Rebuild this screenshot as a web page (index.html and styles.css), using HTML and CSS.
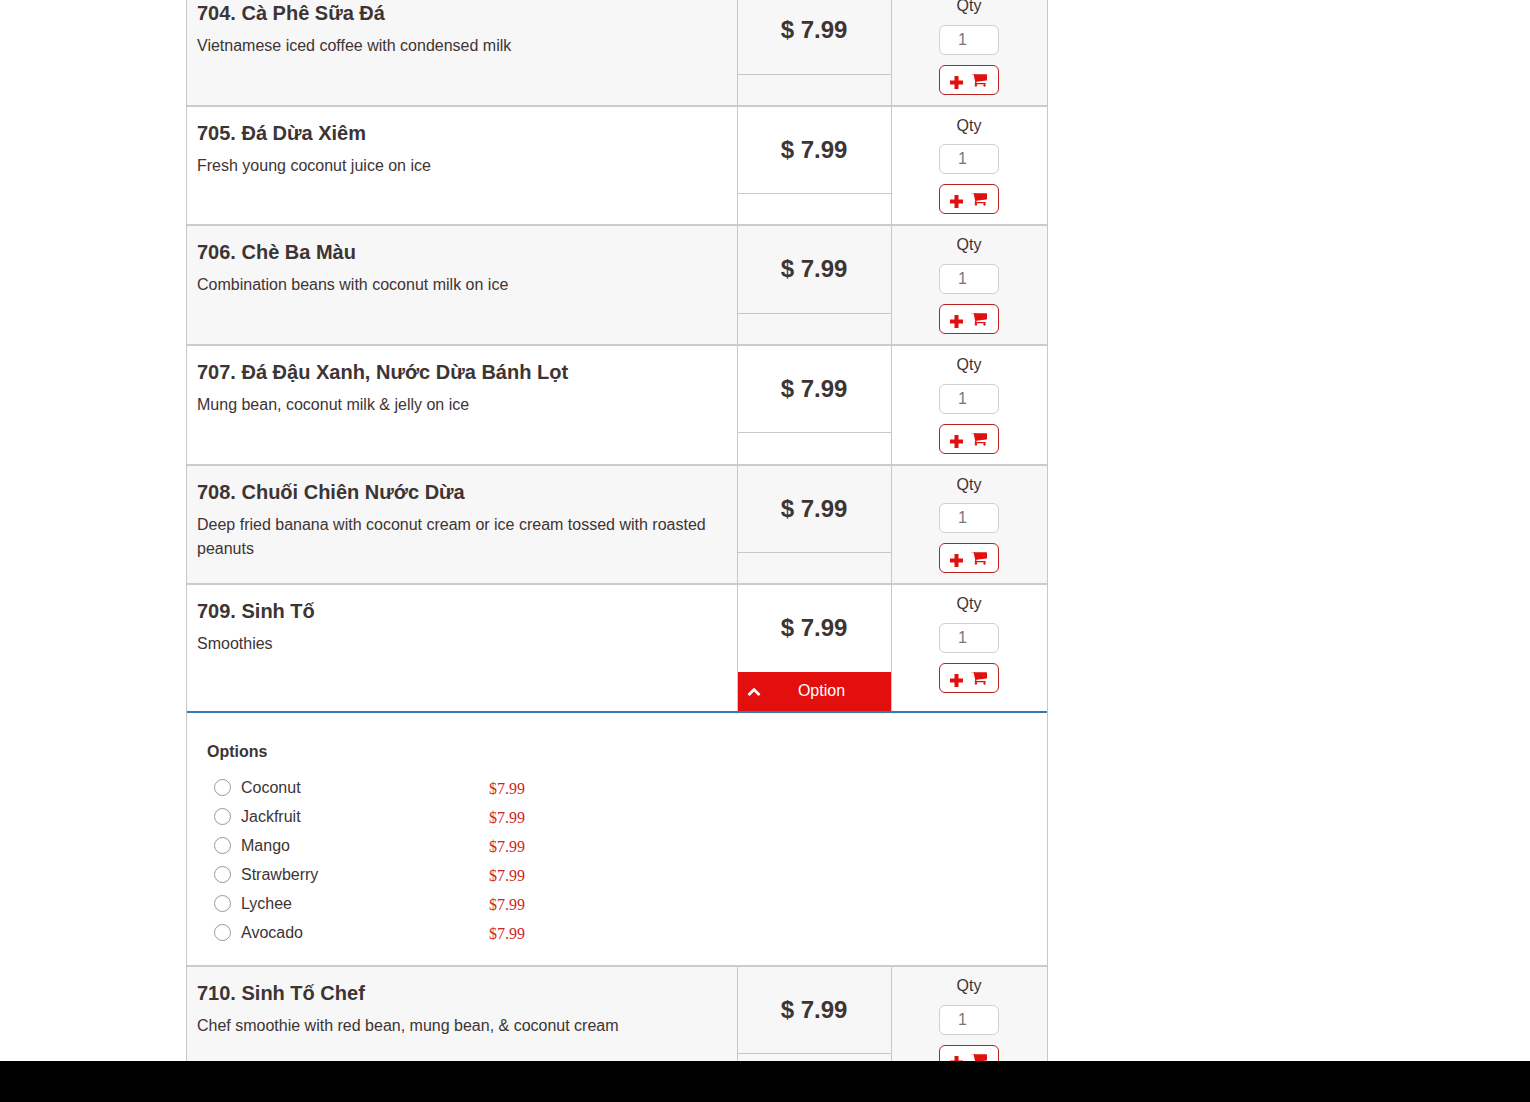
FILE: index.html
```html
<!DOCTYPE html>
<html lang="en">
<head>
    <meta charset="UTF-8">
    <meta name="viewport" content="width=device-width, initial-scale=1.0">
    <title>Menu</title>
    <link rel="stylesheet" href="styles.css">
</head>
<body>
    <svg class="icon-defs" width="0" height="0">
        <symbol id="icon-cart" viewBox="0 384 1664 1280"><path d="M640 1536q0 52-38 90t-90 38-90-38-38-90 38-90 90-38 90 38 38 90zm896 0q0 52-38 90t-90 38-90-38-38-90 38-90 90-38 90 38 38 90zm128-1088v512q0 24-16.500 42.500t-40.500 21.500l-1044 122q13 60 13 70 0 16-24 64h920q26 0 45 19t19 45-19 45-45 19h-1024q-26 0-45-19t-19-45q0-11 8-31.500t16-36 21.500-40 15.500-29.500l-177-823h-204q-26 0-45-19t-19-45 19-45 45-19h256q16 0 28.500 6.500t19.500 15.500 13 24.500 8 26 5.500 29.500 4.500 26h1201q26 0 45 19t19 45z"/></symbol>
        <symbol id="icon-plus" viewBox="0 0 13 13"><path d="M4.500 0h4v4.500h4.500v4H8.500V13h-4V8.500H0v-4h4.500z"/></symbol>
        <symbol id="icon-up" viewBox="0 0 1792 1792"><path d="M1683 1331l-166 165q-19 19-45 19t-45-19l-531-531-531 531q-19 19-45 19t-45-19l-166-165q-19-19-19-45.500t19-45.500l742-741q19-19 45-19t45 19l742 741q19 19 19 45.500t-19 45.500z"/></symbol>
    </svg>

    <div class="menu">
        <!-- 704 -->
        <div class="row shaded">
            <div class="item">
                <h3>704. Cà Phê Sữa Đá</h3>
                <p>Vietnamese iced coffee with condensed milk</p>
            </div>
            <div class="price-cell"><div class="price">$ 7.99</div><div class="price-foot"></div></div>
            <div class="order">
                <label>Qty</label>
                <input class="qty" type="text" value="1">
                <button class="add"><svg class="plus"><use href="#icon-plus"/></svg><svg class="cart"><use href="#icon-cart"/></svg></button>
            </div>
        </div>
        <!-- 705 -->
        <div class="row">
            <div class="item">
                <h3>705. Đá Dừa Xiêm</h3>
                <p>Fresh young coconut juice on ice</p>
            </div>
            <div class="price-cell"><div class="price">$ 7.99</div><div class="price-foot"></div></div>
            <div class="order">
                <label>Qty</label>
                <input class="qty" type="text" value="1">
                <button class="add"><svg class="plus"><use href="#icon-plus"/></svg><svg class="cart"><use href="#icon-cart"/></svg></button>
            </div>
        </div>
        <!-- 706 -->
        <div class="row shaded">
            <div class="item">
                <h3>706. Chè Ba Màu</h3>
                <p>Combination beans with coconut milk on ice</p>
            </div>
            <div class="price-cell"><div class="price">$ 7.99</div><div class="price-foot"></div></div>
            <div class="order">
                <label>Qty</label>
                <input class="qty" type="text" value="1">
                <button class="add"><svg class="plus"><use href="#icon-plus"/></svg><svg class="cart"><use href="#icon-cart"/></svg></button>
            </div>
        </div>
        <!-- 707 -->
        <div class="row">
            <div class="item">
                <h3>707. Đá Đậu Xanh, Nước Dừa Bánh Lọt</h3>
                <p>Mung bean, coconut milk &amp; jelly on ice</p>
            </div>
            <div class="price-cell"><div class="price">$ 7.99</div><div class="price-foot"></div></div>
            <div class="order">
                <label>Qty</label>
                <input class="qty" type="text" value="1">
                <button class="add"><svg class="plus"><use href="#icon-plus"/></svg><svg class="cart"><use href="#icon-cart"/></svg></button>
            </div>
        </div>
        <!-- 708 -->
        <div class="row shaded">
            <div class="item">
                <h3>708. Chuối Chiên Nước Dừa</h3>
                <p>Deep fried banana with coconut cream or ice cream tossed with roasted peanuts</p>
            </div>
            <div class="price-cell"><div class="price">$ 7.99</div><div class="price-foot"></div></div>
            <div class="order">
                <label>Qty</label>
                <input class="qty" type="text" value="1">
                <button class="add"><svg class="plus"><use href="#icon-plus"/></svg><svg class="cart"><use href="#icon-cart"/></svg></button>
            </div>
        </div>
        <!-- 709 with options open -->
        <div class="row open">
            <div class="item">
                <h3>709. Sinh Tố</h3>
                <p>Smoothies</p>
            </div>
            <div class="price-cell">
                <div class="price">$ 7.99</div>
                <button class="option-btn"><svg class="up"><use href="#icon-up"/></svg><span>Option</span></button>
            </div>
            <div class="order">
                <label>Qty</label>
                <input class="qty" type="text" value="1">
                <button class="add"><svg class="plus"><use href="#icon-plus"/></svg><svg class="cart"><use href="#icon-cart"/></svg></button>
            </div>
        </div>
        <div class="options">
            <h4>Options</h4>
            <div class="option"><input type="radio" name="smoothie"><span class="name">Coconut</span><span class="opt-price">$7.99</span></div>
            <div class="option"><input type="radio" name="smoothie"><span class="name">Jackfruit</span><span class="opt-price">$7.99</span></div>
            <div class="option"><input type="radio" name="smoothie"><span class="name">Mango</span><span class="opt-price">$7.99</span></div>
            <div class="option"><input type="radio" name="smoothie"><span class="name">Strawberry</span><span class="opt-price">$7.99</span></div>
            <div class="option"><input type="radio" name="smoothie"><span class="name">Lychee</span><span class="opt-price">$7.99</span></div>
            <div class="option"><input type="radio" name="smoothie"><span class="name">Avocado</span><span class="opt-price">$7.99</span></div>
        </div>
        <!-- 710 -->
        <div class="row shaded">
            <div class="item">
                <h3>710. Sinh Tố Chef</h3>
                <p>Chef smoothie with red bean, mung bean, &amp; coconut cream</p>
            </div>
            <div class="price-cell"><div class="price">$ 7.99</div><div class="price-foot"></div></div>
            <div class="order">
                <label>Qty</label>
                <input class="qty" type="text" value="1">
                <button class="add"><svg class="plus"><use href="#icon-plus"/></svg><svg class="cart"><use href="#icon-cart"/></svg></button>
            </div>
        </div>
    </div>

    <div class="bottom-bar"></div>
</body>
</html>
```

FILE: styles.css
```css
html, body {
    height: 100%;
    overflow: hidden;
}
body {
    font-family: "Liberation Sans", Arial, sans-serif;
    font-size: 16px;
    color: #3d3434;
    background-color: #fff;
    margin: 0;
    padding: 0;
}
.icon-defs {
    display: block;
}
.menu {
    width: 862px;
    margin: -12.8px 0 0 186px;
    box-sizing: border-box;
    border-left: 1px solid #c8c8c8;
    border-right: 1px solid #c8c8c8;
}
.row {
    display: grid;
    grid-template-columns: 550px 155px 155px;
    box-sizing: border-box;
    min-height: 119.6px;
    border-bottom: 2px solid #cccccc;
}
.row.shaded {
    background-color: #f7f7f7;
}
.row.open {
    min-height: 128px;
    border-bottom-color: #337ab7;
}
.item {
    padding: 11px 10px 0;
}
.item h3 {
    margin: 0;
    font-size: 20px;
    line-height: 30px;
    font-weight: bold;
}
.item p {
    margin: 6px 0 0;
    line-height: 24px;
}
.price-cell {
    display: flex;
    flex-direction: column;
    border-left: 1px solid #c8c8c8;
    border-right: 1px solid #c8c8c8;
}
.price {
    box-sizing: border-box;
    height: 86.4px;
    padding: 29px 1px 0 0;
    font-size: 24px;
    line-height: 28px;
    font-weight: bold;
    text-align: center;
}
.price-foot {
    flex: 1;
    border-top: 1px solid #c8c8c8;
}
.option-btn {
    flex: 1;
    display: flex;
    align-items: center;
    padding: 0 0 0 9px;
    border: none;
    background-color: #e30e0e;
    color: #fff;
    font-family: inherit;
    font-size: 16px;
}
.option-btn span {
    flex: 1;
    padding: 0 9px 1px 0;
    text-align: center;
}
.up {
    width: 14px;
    height: 14px;
    fill: #fff;
}
.order {
    display: flex;
    flex-direction: column;
    align-items: center;
    padding: 10px 1px 0 0;
}
.order label {
    line-height: 18px;
}
.qty {
    box-sizing: border-box;
    width: 60px;
    height: 30px;
    margin-top: 9.6px;
    padding: 0 0 0 18px;
    border: 1px solid #d0d0d0;
    border-radius: 6px;
    background-color: #fff;
    color: #777;
    font-family: inherit;
    font-size: 16px;
}
.add {
    display: flex;
    align-items: center;
    box-sizing: border-box;
    width: 60px;
    height: 30px;
    margin-top: 10px;
    padding: 0 0 0 10px;
    border: 1px solid #b92020;
    border-radius: 6px;
    background-color: #fff;
}
.plus {
    width: 13px;
    height: 13px;
    margin-top: 5px;
    fill: #e30e0e;
}
.cart {
    width: 16px;
    height: 13px;
    margin: 1px 0 0 8px;
    fill: #e30e0e;
}
.options {
    box-sizing: border-box;
    height: 253.8px;
    padding: 29px 20px 0;
    border-bottom: 2px solid #cccccc;
}
.options h4 {
    margin: 0 0 11px;
    font-size: 16px;
    line-height: 20px;
    font-weight: bold;
}
.option {
    display: flex;
    align-items: center;
    height: 29px;
    padding-left: 7px;
}
.option input {
    appearance: none;
    box-sizing: border-box;
    width: 17px;
    height: 17px;
    margin: 0;
    border: 1px solid #999;
    border-radius: 50%;
    background-color: #fff;
}
.option .name {
    width: 248px;
    margin-left: 10px;
}
.opt-price {
    margin-top: 2px;
    font-family: "Liberation Serif", "Times New Roman", serif;
    color: #cf1f26;
}
.bottom-bar {
    position: fixed;
    left: 0;
    right: 0;
    bottom: 0;
    height: 41px;
    background-color: #000;
}
```
